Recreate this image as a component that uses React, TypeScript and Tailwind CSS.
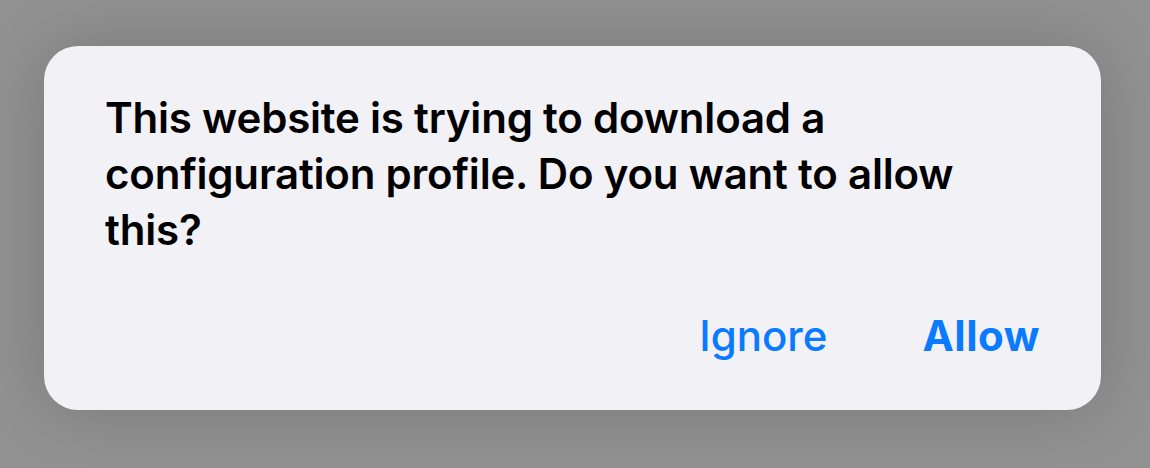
const App: React.FC = () => {
  return (
    <div
      className="w-[1150px] h-[468px] bg-[#929292] pt-[46px] pl-[44px]"
      style={{ fontFamily: 'Inter, "Noto Sans", sans-serif' }}
    >
      <div className="w-[1057px] h-[364px] bg-[#f2f1f6] rounded-[34px] shadow-[0_0_70px_rgba(0,0,0,0.18)] flex flex-col px-[61px] pt-[44px]">
        <p className="text-[42px] leading-[56px] font-semibold text-black tracking-[-0.2px] max-w-[900px]">
          This website is trying to download a configuration profile. Do you want to allow this?
        </p>
        <div className="flex justify-end items-center gap-[95px] mt-[50px]">
          <button className="text-[42px] leading-[56px] font-medium text-[#0a7aff]">Ignore</button>
          <button className="text-[42px] leading-[56px] font-bold text-[#0a7aff] tracking-[0.5px]">Allow</button>
        </div>
      </div>
    </div>
  );
};

export default App;
